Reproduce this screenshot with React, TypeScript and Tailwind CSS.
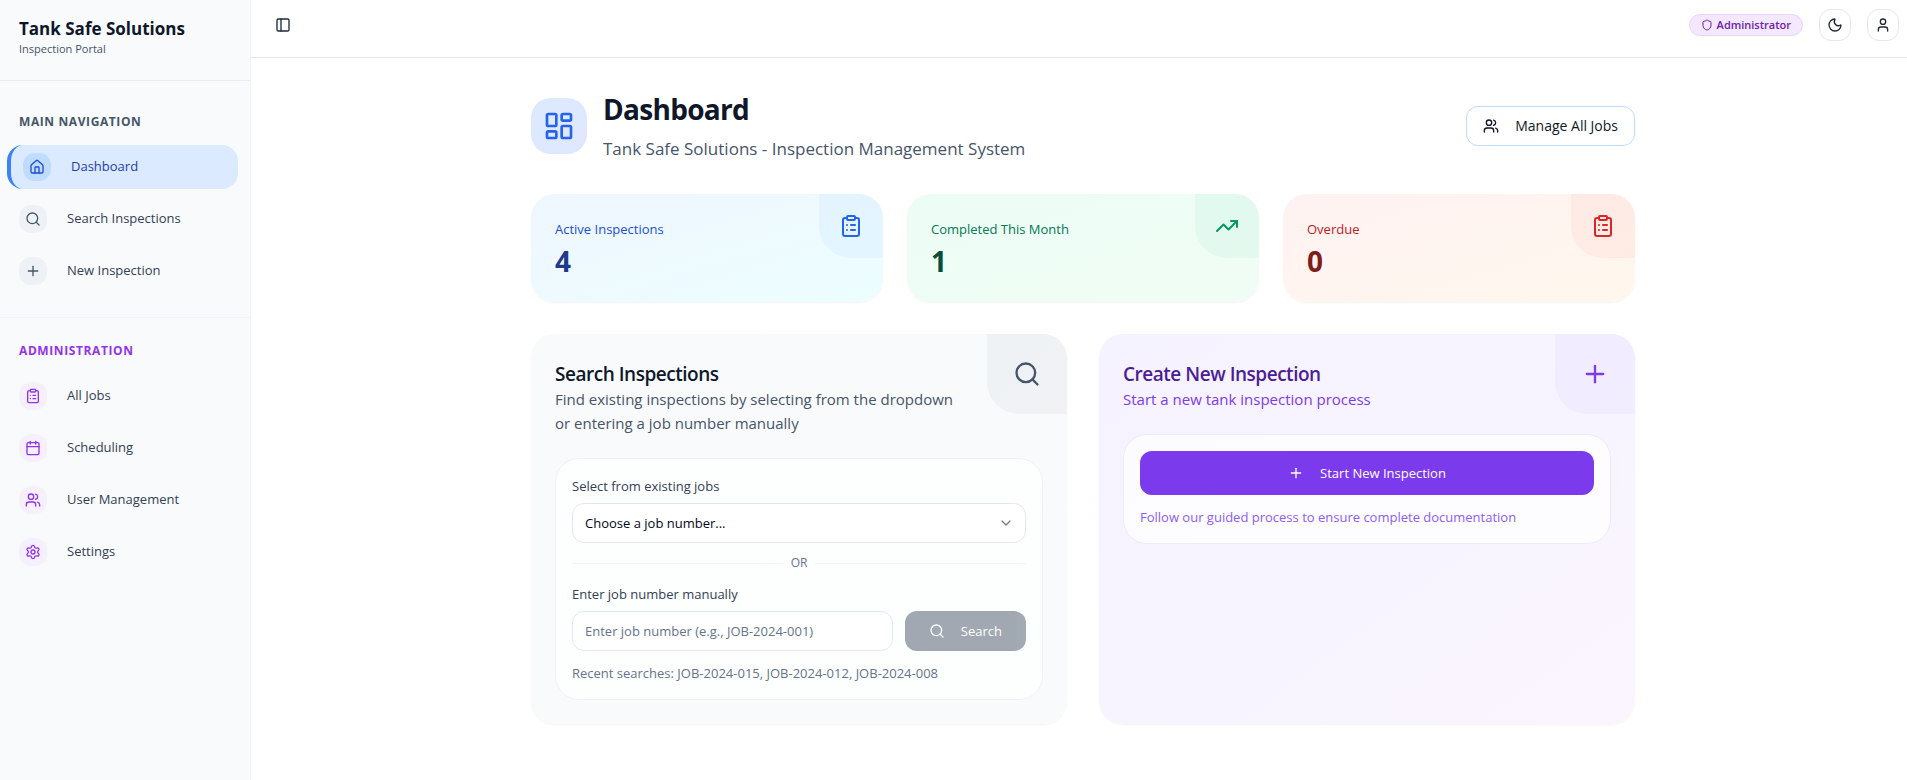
import type { ReactNode } from "react";
import {
  Calendar,
  ChevronDown,
  ClipboardList,
  House,
  LayoutDashboard,
  Moon,
  PanelLeft,
  Plus,
  Search,
  Settings,
  Shield,
  TrendingUp,
  User,
  Users,
  type LucideIcon,
} from "lucide-react";
import clsx from "clsx";

interface NavItem {
  label: string;
  icon: LucideIcon;
  active?: boolean;
}

const mainNav: NavItem[] = [
  { label: "Dashboard", icon: House, active: true },
  { label: "Search Inspections", icon: Search },
  { label: "New Inspection", icon: Plus },
];

const adminNav: NavItem[] = [
  { label: "All Jobs", icon: ClipboardList },
  { label: "Scheduling", icon: Calendar },
  { label: "User Management", icon: Users },
  { label: "Settings", icon: Settings },
];

const stats = [
  {
    label: "Active Inspections",
    value: 4,
    icon: ClipboardList,
    card: "from-[#eff6ff] to-[#ecfeff]",
    text: "text-[#1d4ed8]",
    number: "text-[#1e3a8a]",
    corner: "bg-[#3b82f6]/5 text-[#2563eb]",
  },
  {
    label: "Completed This Month",
    value: 1,
    icon: TrendingUp,
    card: "from-[#ecfdf5] to-[#f0fdf4]",
    text: "text-[#047857]",
    number: "text-[#064e3b]",
    corner: "bg-[#10b981]/5 text-[#059669]",
  },
  {
    label: "Overdue",
    value: 0,
    icon: ClipboardList,
    card: "from-[#fef2f2] to-[#fff7ed]",
    text: "text-[#b91c1c]",
    number: "text-[#7f1d1d]",
    corner: "bg-[#ef4444]/5 text-[#dc2626]",
  },
];

function NavList({ items, iconClass }: { items: NavItem[]; iconClass: string }) {
  return (
    <ul className="space-y-2">
      {items.map(({ label, icon: Icon, active }) => (
        <li key={label}>
          <a
            href="#"
            className={clsx(
              "flex h-11 items-center gap-5 rounded-2xl px-3 text-[13px]",
              active ? "border-l-4 border-[#3b82f6] bg-[#dbeafe] text-[#1e40af]" : "text-[#334155]"
            )}
          >
            <span
              className={clsx(
                "flex size-7 items-center justify-center rounded-xl",
                active ? "bg-[#bfdbfe] text-[#1d4ed8]" : iconClass
              )}
            >
              <Icon className="size-4" />
            </span>
            {label}
          </a>
        </li>
      ))}
    </ul>
  );
}

function Sidebar() {
  return (
    <aside className="w-[251px] shrink-0 border-r border-[#f1f5f9] bg-[#f8fafc]">
      <div className="h-[81px] border-b border-[#e9eef5] px-[19px] pt-4">
        <div className="text-[17px] leading-[26px] font-bold text-[#0f172a]">Tank Safe Solutions</div>
        <div className="text-[11px] leading-[14px] text-[#475569]">Inspection Portal</div>
      </div>
      <nav aria-label="Main" className="border-b border-[#f1f5f9] pt-8 pr-3 pb-6 pl-[7px]">
        <h2 className="mb-[14px] px-3 text-xs leading-[18px] font-bold tracking-wider text-[#475569]">MAIN NAVIGATION</h2>
        <NavList items={mainNav} iconClass="bg-[#eef2f6] text-[#475569]" />
      </nav>
      <nav aria-label="Administration" className="pt-6 pr-3 pl-[7px]">
        <h2 className="mb-[14px] px-3 text-xs leading-[18px] font-bold tracking-wider text-[#9333ea]">ADMINISTRATION</h2>
        <NavList items={adminNav} iconClass="bg-[#f3e8ff]/60 text-[#9333ea]" />
      </nav>
    </aside>
  );
}

function TopBar() {
  return (
    <header className="flex h-[58px] items-start justify-between border-b border-[#e5e7eb] pt-[9px] pr-2 pl-4 text-[#1e293b]">
      <button aria-label="Toggle sidebar" className="flex size-8 items-center justify-center">
        <PanelLeft className="size-4" />
      </button>
      <div className="flex items-center gap-4">
        <span className="flex h-[22px] items-center gap-1 rounded-full border border-[#e9d5ff] bg-[#f3e8ff] px-[11px] text-[11px] font-semibold text-[#6b21a8]">
          <Shield className="size-3" />
          Administrator
        </span>
        <button
          aria-label="Toggle theme"
          className="flex size-8 items-center justify-center rounded-xl border border-[#e5e7eb]"
        >
          <Moon className="size-4" />
        </button>
        <button
          aria-label="Account"
          className="flex size-8 items-center justify-center rounded-xl border border-[#e5e7eb]"
        >
          <User className="size-4" />
        </button>
      </div>
    </header>
  );
}

interface PanelProps {
  title: string;
  description: string;
  icon: LucideIcon;
  card: string;
  corner: string;
  titleClass: string;
  descriptionClass: string;
  innerClass: string;
  children: ReactNode;
}

function Panel(props: PanelProps) {
  const Icon = props.icon;
  return (
    <section className={clsx("relative overflow-hidden rounded-3xl bg-linear-to-br p-6 shadow-xs", props.card)}>
      <div
        className={clsx(
          "absolute top-0 right-0 flex size-20 items-center justify-center rounded-bl-[32px]",
          props.corner
        )}
      >
        <Icon className="size-7" />
      </div>
      <div className="mb-[23px] pt-[3px] pr-18">
        <h2 className={clsx("text-[19px] leading-[26px] font-semibold tracking-tight", props.titleClass)}>
          {props.title}
        </h2>
        <p className={clsx("text-[15px] leading-6", props.descriptionClass)}>{props.description}</p>
      </div>
      <div className={clsx("space-y-3 rounded-3xl border bg-white/70 p-4 text-[13px] leading-5", props.innerClass)}>
        {props.children}
      </div>
    </section>
  );
}

export default function App() {
  return (
    <div className="flex min-h-screen bg-white font-['Open_Sans','Noto_Sans',sans-serif]">
      <Sidebar />
      <div className="min-w-0 flex-1">
        <TopBar />
        <main className="pl-2">
          <div className="mx-auto max-w-6xl space-y-8 px-6 py-8">
            <div className="flex items-center justify-between">
              <div className="flex items-center gap-4">
                <div className="flex size-14 items-center justify-center rounded-[20px] bg-linear-to-br from-[#dbeafe] to-[#e0e7ff] text-[#2563eb]">
                  <LayoutDashboard className="size-8" />
                </div>
                <div>
                  <h1 className="text-[28px] leading-[38px] font-bold tracking-tight text-[#0f172a]">Dashboard</h1>
                  <p className="mt-2 text-[17px] leading-[26px] text-[#475569]">
                    Tank Safe Solutions - Inspection Management System
                  </p>
                </div>
              </div>
              <button className="flex h-10 items-center gap-4 rounded-xl border border-[#bfdbfe] bg-white px-4 text-sm text-[#0f172a]">
                <Users className="size-4" />
                Manage All Jobs
              </button>
            </div>

            <div className="grid grid-cols-3 gap-6">
              {stats.map(({ label, value, icon: Icon, card, text, number, corner }) => (
                <div key={label} className={clsx("relative overflow-hidden rounded-3xl bg-linear-to-br p-6 shadow-xs", card)}>
                  <div
                    className={clsx(
                      "absolute top-0 right-0 flex size-16 items-center justify-center rounded-bl-[32px]",
                      corner
                    )}
                  >
                    <Icon className="size-6" />
                  </div>
                  <div className={clsx("text-[13px] leading-[22px]", text)}>{label}</div>
                  <div className={clsx("mt-1 text-[28px] leading-[34px] font-bold", number)}>{value}</div>
                </div>
              ))}
            </div>

            <div className="grid grid-cols-2 gap-8">
              <Panel
                title="Search Inspections"
                description="Find existing inspections by selecting from the dropdown or entering a job number manually"
                icon={Search}
                card="from-[#f8fafc] to-[#f9fafb]"
                corner="bg-linear-to-br from-[#edf2f5] to-[#f2f2f4] text-[#475569]"
                titleClass="text-[#0f172a]"
                descriptionClass="text-[#475569]"
                innerClass="border-[#eef2f6]"
              >
                <div>
                  <label htmlFor="job" className="mb-1.5 block leading-[22px] text-[#334155]">
                    Select from existing jobs
                  </label>
                  <div className="relative">
                    <select
                      id="job"
                      className="h-10 w-full appearance-none rounded-xl border border-[#e2e8f0] bg-white px-3 text-[#020817]"
                    >
                      <option>Choose a job number...</option>
                    </select>
                    <ChevronDown className="pointer-events-none absolute top-3 right-3 size-4 opacity-50" />
                  </div>
                </div>
                <div className="flex items-center text-xs leading-4 text-[#64748b]">
                  <span className="h-px flex-1 bg-[#f1f5f9]" />
                  <span className="px-2">OR</span>
                  <span className="h-px flex-1 bg-[#f1f5f9]" />
                </div>
                <div>
                  <label htmlFor="manual" className="mb-1.5 block leading-[22px] text-[#334155]">
                    Enter job number manually
                  </label>
                  <div className="flex gap-3">
                    <input
                      id="manual"
                      type="text"
                      placeholder="Enter job number (e.g., JOB-2024-001)"
                      className="h-10 min-w-0 flex-1 rounded-xl border border-[#e2e8f0] bg-white px-3 placeholder:text-[#64748b]"
                    />
                    <button
                      disabled
                      className="flex h-10 items-center gap-4 rounded-xl bg-[#475569] px-6 text-white opacity-50"
                    >
                      <Search className="size-4" />
                      Search
                    </button>
                  </div>
                </div>
                <p className="text-[#64748b]">Recent searches: JOB-2024-015, JOB-2024-012, JOB-2024-008</p>
              </Panel>

              <Panel
                title="Create New Inspection"
                description="Start a new tank inspection process"
                icon={Plus}
                card="from-[#f5f3ff] to-[#faf5ff]"
                corner="bg-[#8b5cf6]/5 text-[#7c3aed]"
                titleClass="text-[#4c1d95]"
                descriptionClass="text-[#7c3aed]"
                innerClass="border-[#ede9fe]"
              >
                <button className="flex h-11 w-full items-center justify-center gap-4 rounded-xl bg-[#7c3aed] text-white">
                  <Plus className="size-4" />
                  Start New Inspection
                </button>
                <p className="text-[#8b5cf6]">Follow our guided process to ensure complete documentation</p>
              </Panel>
            </div>
          </div>
        </main>
      </div>
    </div>
  );
}
